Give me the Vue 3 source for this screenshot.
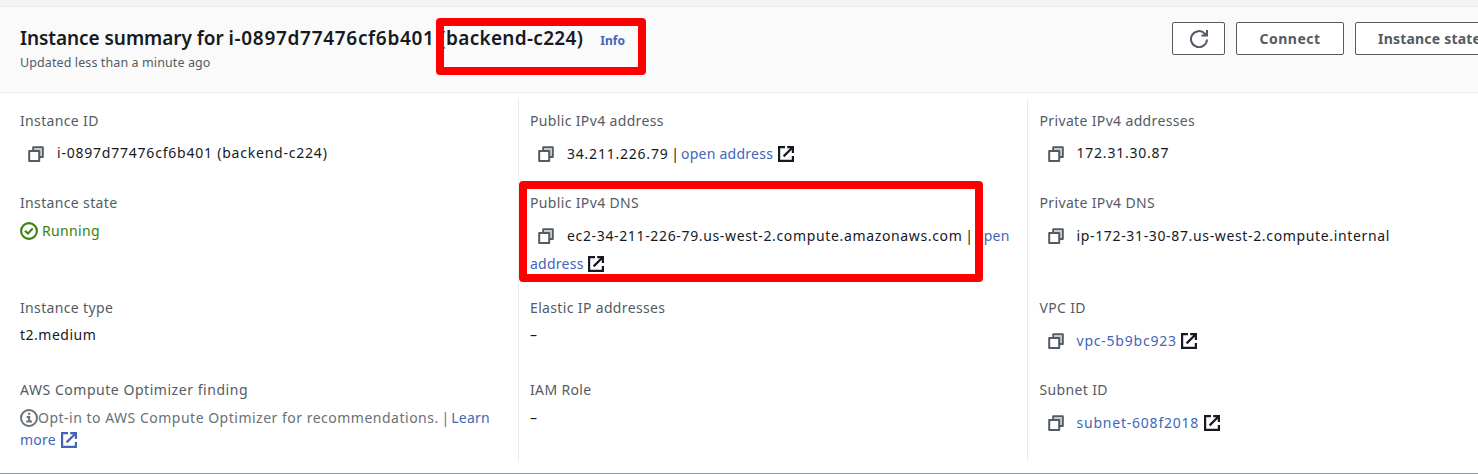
<script setup>
import { h } from 'vue'

const CopyIcon = () =>
  h('svg', { class: 'icon copy', viewBox: '0 0 16 16', width: 16, height: 16 }, [
    h('path', { d: 'M5.2 4V1.2H14.8V11H12', fill: 'none', stroke: '#545b64', 'stroke-width': 2, 'stroke-linejoin': 'round' }),
    h('path', { d: 'M6 2H14V10H12V4H6Z', fill: '#c5c8cc' }),
    h('path', { d: 'M1.2 5H11.2V15H1.2Z', fill: '#fff', stroke: '#545b64', 'stroke-width': 2, 'stroke-linejoin': 'round' }),
  ])

const ExternalIcon = () =>
  h('svg', { class: 'icon external', viewBox: '0 0 16 16', width: 16, height: 16, fill: 'none', stroke: 'currentColor', 'stroke-width': 2.2 }, [
    h('path', { d: 'M7 1.1H1.1V14.9H14.9V10M9.2 1.1H14.9V7M14.5 1.5L5.6 10.4' }),
    h('path', { d: 'M11 1H15V5Z', fill: 'currentColor', stroke: 'none' }),
  ])
</script>

<template>
  <main class="panel">
    <header class="header">
      <div class="heading">
        <h2><span>Instance summary for <span class="title-id">i-0897d77476cf6b401</span> <span class="title-name">(backend-c224)</span></span><a class="info">Info</a></h2>
        <p class="updated">Updated less than a minute ago</p>
      </div>
      <div class="actions">
        <button class="btn refresh" aria-label="Refresh">
          <svg viewBox="0 0 18 18" width="18" height="18" fill="none" stroke="#545b64" stroke-width="2">
            <path d="M17 9.5A8 8 0 1 1 14.8 3.6L16.2 5M17 0V5.6H11.4" />
            <path d="M13.2 5.6L17 1.8V5.6Z" fill="#545b64" stroke="none" />
          </svg>
        </button>
        <button class="btn connect"><span>Connect</span></button>
        <button class="btn state"><span>Instance state</span></button>
      </div>
      <div class="mark mark-title"></div>
    </header>

    <section class="columns">
      <div class="col">
        <div class="field">
          <div class="label">Instance ID</div>
          <div class="value copyable up"><CopyIcon /><span class="wide">i-0897d77476cf6b401 (backend-c224)</span></div>
        </div>
        <div class="field">
          <div class="label">Instance state</div>
          <div class="value running">
            <svg class="icon" viewBox="0 0 18 18" width="18" height="18" fill="none" stroke="#37830b" stroke-width="2.1">
              <circle cx="9" cy="9" r="7.9" /><path d="M5 8.8L8 11.6L12.7 6.4" />
            </svg><span>Running</span>
          </div>
        </div>
        <div class="field">
          <div class="label">Instance type</div>
          <div class="value medium">t2.medium</div>
        </div>
        <div class="field">
          <div class="label finding">AWS Compute Optimizer finding</div>
          <div class="value muted">
            <svg class="icon" viewBox="0 0 18 18" width="18" height="18" fill="none" stroke="#687078" stroke-width="2">
              <circle cx="9" cy="9" r="8" /><path d="M8 4.8H10.2M6.7 8H9.2V12.5M6.3 12.5H12" />
            </svg><span class="medium">Opt-in to AWS Compute Optimizer for recommendations.</span><span class="pipe"> | </span><a>Learn</a><br><a>more</a> <a><ExternalIcon /></a>
          </div>
        </div>
      </div>

      <div class="col">
        <div class="field">
          <div class="label">Public IPv4 address</div>
          <div class="value copyable"><CopyIcon /><span class="wide">34.211.226.79</span><span class="pipe"> | </span><a>open address</a> <ExternalIcon /></div>
        </div>
        <div class="field">
          <div class="label">Public IPv4 DNS</div>
          <div class="value copyable"><CopyIcon /><span class="host">ec2-34-211-226-79.us-west-2.compute.amazonaws.com</span><span class="pipe"> | </span><a>open</a><br><a>address</a> <ExternalIcon /></div>
          <div class="mark mark-dns"></div>
        </div>
        <div class="field">
          <div class="label">Elastic IP addresses</div>
          <div class="value">–</div>
        </div>
        <div class="field">
          <div class="label">IAM Role</div>
          <div class="value last">–</div>
        </div>
      </div>

      <div class="col">
        <div class="field">
          <div class="label">Private IPv4 addresses</div>
          <div class="value copyable up"><CopyIcon /><span class="wide">172.31.30.87</span></div>
        </div>
        <div class="field">
          <div class="label">Private IPv4 DNS</div>
          <div class="value copyable"><CopyIcon /><span class="host">ip-172-31-30-87.us-west-2.compute.internal</span></div>
        </div>
        <div class="field">
          <div class="label">VPC ID</div>
          <div class="value copyable"><CopyIcon /><a class="wide">vpc-5b9bc923</a> <ExternalIcon /></div>
        </div>
        <div class="field">
          <div class="label">Subnet ID</div>
          <div class="value copyable"><CopyIcon /><a class="wide">subnet-608f2018</a> <ExternalIcon /></div>
        </div>
      </div>
    </section>
  </main>
</template>

<style>
html, body { margin: 0; overflow: hidden; background: #fff; }
</style>

<style scoped>
.panel {
  box-sizing: border-box;
  width: 1478px;
  height: 474px;
  overflow: hidden;
  border-top: 6px solid #f2f3f3;
  border-bottom: 1px solid #879196;
  background: #fff;
  color: #16191f;
  font: 14px/22px "Noto Sans", "Open Sans", sans-serif;
}
.header {
  position: relative;
  box-sizing: border-box;
  height: 87px;
  display: flex;
  justify-content: space-between;
  padding: 16px 0 0 20px;
  background: #fafafa;
  border-top: 1px solid #eaeded;
  border-bottom: 1px solid #eaeded;
}
h2 { margin: 0; font-size: 19px; line-height: 30px; font-weight: 600; letter-spacing: -.06px; white-space: nowrap; }
.title-id { letter-spacing: .69px; }
.title-name { letter-spacing: .3px; }
.info { margin-left: 17px; font-size: 12px; font-weight: 700; letter-spacing: .1px; }
a { color: #3f66b8; letter-spacing: .25px; }
.updated { margin: 0; font-size: 12.5px; line-height: 14px; letter-spacing: .1px; color: #545b64; }
.actions { flex: none; display: flex; gap: 11px; width: 306px; height: 33px; margin-top: -1px; }
.btn {
  box-sizing: border-box;
  flex: none;
  height: 33px;
  padding: 0;
  display: flex;
  align-items: center;
  justify-content: center;
  border: 1px solid #545b64;
  border-radius: 2px;
  background: #fff;
  color: #545b64;
  font: 700 14px/22px "Noto Sans", sans-serif;
  letter-spacing: .5px;
  white-space: nowrap;
}
.refresh { width: 53px; }
.connect { width: 108px; }
.state { width: 150px; justify-content: flex-start; padding-left: 22px; letter-spacing: .2px; }
.mark { position: absolute; box-sizing: border-box; border: 8px solid #f00; border-radius: 4px; z-index: 2; }
.mark-title { left: 436.4px; top: 10.5px; width: 210px; height: 57px; }
.mark-dns { left: -11px; top: -11.5px; width: 464.4px; height: 101px; }
.columns { display: grid; grid-template-columns: 518px 509px 451px; height: 364px; padding-top: 5px; }
.col {
  box-sizing: border-box;
  display: grid;
  grid-template-rows: 82px 105px 82px 82px;
  padding: 12px 0 0 11px;
  border-left: 1px solid #eaeded;
}
.col:first-child { padding-left: 20px; border-left: 0; }
.col:last-child { padding-left: 11.5px; }
.field { position: relative; white-space: nowrap; }
.label { color: #545b64; letter-spacing: .35px; }
.value { margin-top: 5px; }
.copyable { margin-top: 8px; line-height: 28px; }
.up span { position: relative; top: -1px; }
.medium { letter-spacing: .5px; }
.finding { letter-spacing: .54px; }
.host { letter-spacing: .65px; }
.wide { letter-spacing: .78px; }
.pipe { letter-spacing: -.85px; }
.icon { position: relative; vertical-align: middle; }
.copy { top: -1px; margin: 0 13px 0 8px; }
.col:last-child .copy { left: .5px; }
.external { top: -1px; margin-left: 1px; }
.running { display: flex; align-items: center; gap: 4px; margin-top: 6px; color: #37830b; letter-spacing: .35px; }
.muted { margin-top: 6px; color: #687078; }
.muted .icon { top: -1px; }
.last { margin-top: 6px; }
</style>
